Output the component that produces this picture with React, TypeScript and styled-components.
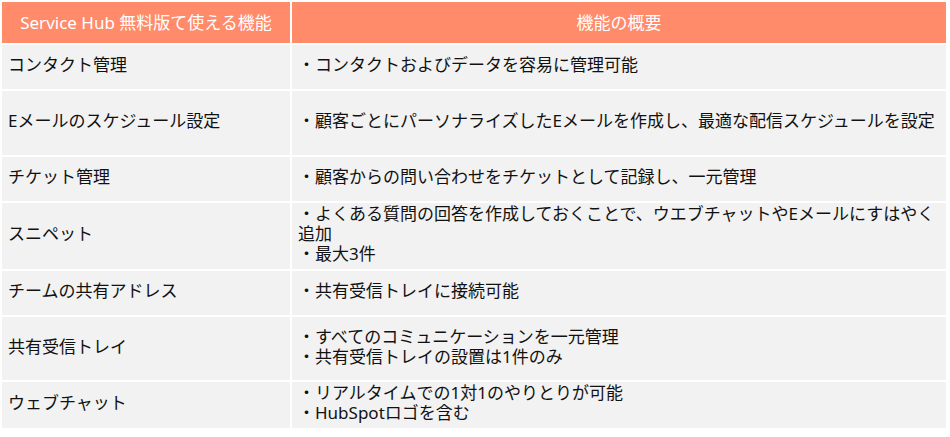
import React from "react";
import styled, { createGlobalStyle } from "styled-components";

const GlobalStyle = createGlobalStyle`
  html, body {
    margin: 0;
    padding: 0;
    background: #ffffff;
  }
  body {
    font-family: "Noto Sans", "Noto Sans CJK JP", sans-serif;
    color: #111111;
  }
`;

interface FeatureRow {
  name: string;
  lines: string[];
  height: number;
}

const rows: FeatureRow[] = [
  { name: "コンタクト管理", lines: ["・コンタクトおよびデータを容易に管理可能"], height: 44 },
  {
    name: "Eメールのスケジュール設定",
    lines: ["・顧客ごとにパーソナライズしたEメールを作成し、最適な配信スケジュールを設定"],
    height: 64,
  },
  { name: "チケット管理", lines: ["・顧客からの問い合わせをチケットとして記録し、一元管理"], height: 44 },
  {
    name: "スニペット",
    lines: [
      "・よくある質問の回答を作成しておくことで、ウエブチャットやEメールにすはやく追加",
      "・最大3件",
    ],
    height: 66,
  },
  { name: "チームの共有アドレス", lines: ["・共有受信トレイに接続可能"], height: 44 },
  {
    name: "共有受信トレイ",
    lines: ["・すべてのコミュニケーションを一元管理", "・共有受信トレイの設置は1件のみ"],
    height: 63,
  },
  {
    name: "ウェブチャット",
    lines: ["・リアルタイムでの1対1のやりとりが可能", "・HubSpotロゴを含む"],
    height: 46,
  },
];

const Page = styled.div`
  padding: 2px 0 0 2px;
`;

const Table = styled.div`
  display: grid;
  grid-template-columns: 288px 654px;
  column-gap: 2px;
  row-gap: 2px;
  width: 944px;
`;

const HeadCell = styled.div`
  height: 41px;
  background: #ff8b6b;
  color: #ffffff;
  font-size: 17px;
  display: flex;
  align-items: center;
  justify-content: center;
  padding-bottom: 2px;
  box-sizing: border-box;
`;

const Cell = styled.div<{ $h: number }>`
  height: ${(p) => p.$h}px;
  background: #f2f2f2;
  font-size: 17px;
  line-height: 20px;
  display: flex;
  flex-direction: column;
  justify-content: center;
  padding: 0 6px 4px 6px;
  box-sizing: border-box;
`;

const Line = styled.div`
  white-space: normal;
`;

export default function App() {
  return (
    <>
      <GlobalStyle />
      <Page>
        <Table>
          <HeadCell>Service Hub 無料版て使える機能</HeadCell>
          <HeadCell>機能の概要</HeadCell>
          {rows.map((row) => (
            <React.Fragment key={row.name}>
              <Cell $h={row.height}>{row.name}</Cell>
              <Cell $h={row.height}>
                {row.lines.map((line) => (
                  <Line key={line}>{line}</Line>
                ))}
              </Cell>
            </React.Fragment>
          ))}
        </Table>
      </Page>
    </>
  );
}
